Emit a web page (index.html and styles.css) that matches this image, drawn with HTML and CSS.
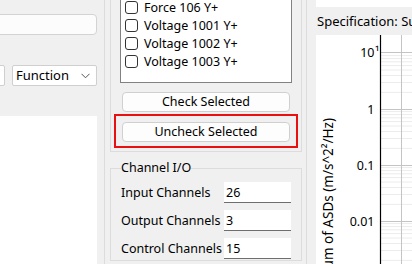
FILE: index.html
```html
<!DOCTYPE html>
<html>
<head>
<meta charset="utf-8">
<link rel="stylesheet" href="styles.css">
</head>
<body>
<div class="app">
  <div class="left">
    <div class="search"></div>
    <div class="filters">
      <div class="select stub"></div>
      <div class="select"><span>Function</span>
        <svg class="chev" width="9" height="6" viewBox="0 0 9 6"><path d="M0.5 0.8 L4.5 4.8 L8.5 0.8" fill="none" stroke="#555" stroke-width="1"/></svg>
      </div>
    </div>
    <div class="leftlist"></div>
  </div>
  <div class="middle">
    <div class="upper">
      <div class="listbox">
        <div class="item"><span class="cb"></span>Force 106 Y+</div>
        <div class="item"><span class="cb"></span>Voltage 1001 Y+</div>
        <div class="item"><span class="cb"></span>Voltage 1002 Y+</div>
        <div class="item"><span class="cb"></span>Voltage 1003 Y+</div>
      </div>
      <button class="btn">Check Selected</button>
      <div class="highlight"><button class="btn">Uncheck Selected</button></div>
    </div>
    <fieldset class="group">
      <legend>Channel I/O</legend>
      <div class="row"><span class="lbl">Input Channels</span><span class="field">26</span></div>
      <div class="row"><span class="lbl">Output Channels</span><span class="field">3</span></div>
      <div class="row"><span class="lbl">Control Channels</span><span class="field">15</span></div>
    </fieldset>
  </div>
  <div class="right">
    <div class="topstrip"></div>
    <div class="charthead">Specification: Sum of ASDs</div>
    <div class="chart">
      <svg width="96" height="229" viewBox="0 0 96 229">
        <g stroke="#ececec" stroke-width="1">
          <path d="M65 57.4H96M65 47.5H96M65 40.5H96M65 35.0H96M65 30.6H96M65 26.8H96M65 23.6H96M65 20.6H96"/>
          <path d="M65 113.4H96M65 103.5H96M65 96.5H96M65 91.0H96M65 86.6H96M65 82.8H96M65 79.6H96M65 76.6H96"/>
          <path d="M65 169.4H96M65 159.5H96M65 152.5H96M65 147.0H96M65 142.6H96M65 138.8H96M65 135.6H96M65 132.6H96"/>
          <path d="M65 225.4H96M65 215.5H96M65 208.5H96M65 203.0H96M65 198.6H96M65 194.8H96M65 191.6H96M65 188.6H96"/>
        </g>
        <g stroke="#c4c4c4" stroke-width="1">
          <path d="M65 17.5H96M65 74.5H96M65 130.5H96M65 186.5H96"/>
          <path d="M85.5 0V229"/>
        </g>
        <path d="M64.5 0V229" stroke="#000" stroke-width="1.2"/>
        <g class="ticks" text-anchor="end">
          <text x="58.5" y="21.5">10</text>
          <text x="58.5" y="78.5">1</text>
          <text x="58.5" y="134.5">0.1</text>
          <text x="58.5" y="190.5">0.01</text>
        </g>
        <text class="ticks" x="59" y="21">¹</text>
        <text class="ylabel" transform="translate(17 83) rotate(-90)" text-anchor="end">Sum of ASDs (m/s^2²/Hz)</text>
      </svg>
    </div>
  </div>
</div>
</body>
</html>
```
FILE: styles.css
```css
* { box-sizing: border-box; }
html, body {
  margin: 0;
  padding: 0;
  width: 412px;
  height: 264px;
  overflow: hidden;
  background: #f0f0f0;
  font-family: "Noto Sans", "Liberation Sans", sans-serif;
  font-size: 12.5px;
  color: #000;
}
.app {
  display: flex;
  height: 264px;
}
.left {
  width: 105px;
  flex: none;
  border-right: 1px solid #dcdcdc;
  display: flex;
  flex-direction: column;
}
.search {
  margin-top: 14px;
  margin-left: -20px;
  width: 117px;
  height: 21px;
  background: #fcfcfc;
  border: 1px solid #d3d3d3;
  border-radius: 4px;
}
.filters {
  display: flex;
  gap: 7px;
  margin-top: 30px;
  margin-left: -20px;
}
.select {
  height: 21px;
  width: 85px;
  background: #fff;
  border: 1px solid #cfcfcf;
  border-radius: 2px;
  display: flex;
  align-items: center;
  justify-content: space-between;
  padding: 0 6px 0 3px;
  line-height: 1;
  font-size: 13px;
}
.select.stub { width: 25px; }
.chev { display: block; }
.leftlist {
  margin-top: 30px;
  width: 97px;
  flex: 1;
  background: #fff;
}
.middle {
  margin-left: 5px;
  width: 192px;
  flex: none;
  display: flex;
  flex-direction: column;
}
.upper {
  border: 1px solid #dcdcdc;
  border-top: none;
  height: 152px;
  padding-left: 3px;
}
.listbox {
  margin-top: -10px;
  margin-left: 6px;
  width: 172px;
  height: 93px;
  background: #fff;
  border: 1px solid #828282;
  padding-top: 7px;
}
.item {
  height: 18px;
  display: flex;
  align-items: center;
  padding-left: 4px;
  gap: 6px;
}
.cb {
  width: 13px;
  height: 13px;
  border: 1px solid #333;
  border-radius: 3px;
  background: #fff;
}
.btn {
  display: block;
  font: inherit;
  color: #000;
  background: #fdfdfd;
  border: 1px solid #d0d0d0;
  border-radius: 4px;
  width: 168px;
  height: 20px;
  padding: 0;
  line-height: 1;
}
.upper > .btn {
  margin-top: 9px;
  margin-left: 8px;
}
.highlight {
  margin-top: 2px;
  width: 184px;
  border: 2px solid #e81010;
  padding: 6px 6px 4px 6px;
}
.group {
  margin: 8px 0 0 0;
  border: 1px solid #dcdcdc;
  padding: 6px 0 1px 10px;
  min-width: 0;
}
.group legend {
  padding: 0;
  line-height: 16px;
}
.row {
  display: flex;
  align-items: center;
  height: 21px;
  margin-bottom: 7px;
}
.row:last-child { margin-bottom: 0; }
.lbl { width: 103px; flex: none; }
.field {
  width: 67px;
  height: 21px;
  background: #fff;
  border-bottom: 1px solid #6e6e6e;
  padding-left: 2px;
  display: flex;
  align-items: center;
}
.right {
  margin-left: 4px;
  flex: 1;
  border-left: 1px solid #dcdcdc;
  padding-left: 9px;
  display: flex;
  flex-direction: column;
}
.topstrip {
  height: 7px;
  background: #fff;
}
.charthead {
  height: 28px;
  padding-left: 1px;
  font-size: 13px;
  line-height: 28px;
  white-space: nowrap;
  overflow: hidden;
}
.chart {
  flex: 1;
  background: #fff;
}
.chart svg { display: block; }
.ticks {
  font-family: "Noto Sans", "Liberation Sans", sans-serif;
  font-size: 12.5px;
  fill: #000;
}
.ylabel {
  font-family: "Noto Sans", "Liberation Sans", sans-serif;
  font-size: 13.5px;
  fill: #000;
}
```
